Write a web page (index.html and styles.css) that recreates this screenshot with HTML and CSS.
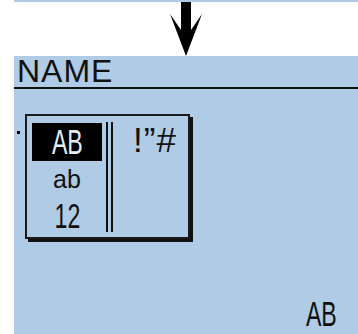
FILE: index.html
```html
<!DOCTYPE html>
<html>
<head>
  <title>NAME</title>
  <link rel="stylesheet" href="styles.css">
</head>
<body>
  <div class="strip"></div>
  <div class="arrow-row">
    <svg class="arrow" width="34" height="54" viewBox="0 0 34 54">
      <path d="M11 0 H21 V28 L32 12 L16 54 L0 12 L11 28 Z" fill="#000"/>
    </svg>
  </div>

  <div class="panel">
    <div class="title">NAME</div>

    <div class="content">
      <span class="cursor"></span>
      <div class="popup">
        <ul class="modes">
          <li class="mode mode-on"><span class="cond">AB</span></li>
          <li class="mode mode-small">ab</li>
          <li class="mode mode-last"><span class="cond">12</span></li>
        </ul>
        <div class="divider"></div>
        <div class="symbols">!&rdquo;#</div>
      </div>
    </div>

    <div class="footer"><span class="cond cond-right">AB</span></div>
  </div>
</body>
</html>
```

FILE: styles.css
```css
body {
  margin: 0;
  background-color: #ffffff;
  font-family: "Liberation Sans", Arial, sans-serif;
  color: #111111;
}

.strip {
  margin-left: 14px;
  height: 2px;
  background-color: #b0cbe5;
}

.arrow-row {
  height: 54px;
  padding-left: 170px;
}

.arrow {
  display: block;
}

.panel {
  margin-left: 14px;
  height: 278px;
  background-color: #b0cbe5;
  display: flex;
  flex-direction: column;
}

/* Header */
.title {
  height: 31px;
  line-height: 31px;
  font-size: 32px;
  letter-spacing: 1px;
  padding-left: 3px;
  border-bottom: 2px solid #111111;
}

.content {
  display: flex;
  align-items: flex-start;
  padding: 25px 0 0 3px;
}

.cursor {
  width: 3px;
  height: 3px;
  margin-top: 17px;
  background-color: #000000;
}

/* Popup menu */
.popup {
  box-sizing: border-box;
  width: 165px;
  height: 125px;
  margin-left: 5px;
  border: 2px solid #1a1a1a;
  box-shadow: 3px 3px 0 #111111;
  display: flex;
  align-items: flex-start;
}

.modes {
  list-style: none;
  margin: 7px 0 0 5px;
  padding: 0;
  width: 70px;
}

.mode {
  height: 38px;
  line-height: 38px;
  font-size: 35px;
  text-align: center;
}

.mode-on {
  background-color: #000000;
  color: #e4ecf5;
}

.mode-small {
  height: 36px;
  line-height: 36px;
  font-size: 25px;
}

.cond {
  display: inline-block;
  transform: scaleX(0.66);
}

.divider {
  box-sizing: border-box;
  width: 7px;
  height: 110px;
  margin: 6px 0 0 4px;
  border-left: 2px solid #111111;
  border-right: 2px solid #111111;
}

.symbols {
  margin: 5px 0 0 20px;
  font-size: 35px;
  line-height: 38px;
  letter-spacing: 1px;
}

/* Footer */
.footer {
  margin-top: auto;
  margin-bottom: 5px;
  padding-right: 21px;
  text-align: right;
  font-size: 35px;
  line-height: 31px;
}

.cond-right {
  transform-origin: right center;
}
```
